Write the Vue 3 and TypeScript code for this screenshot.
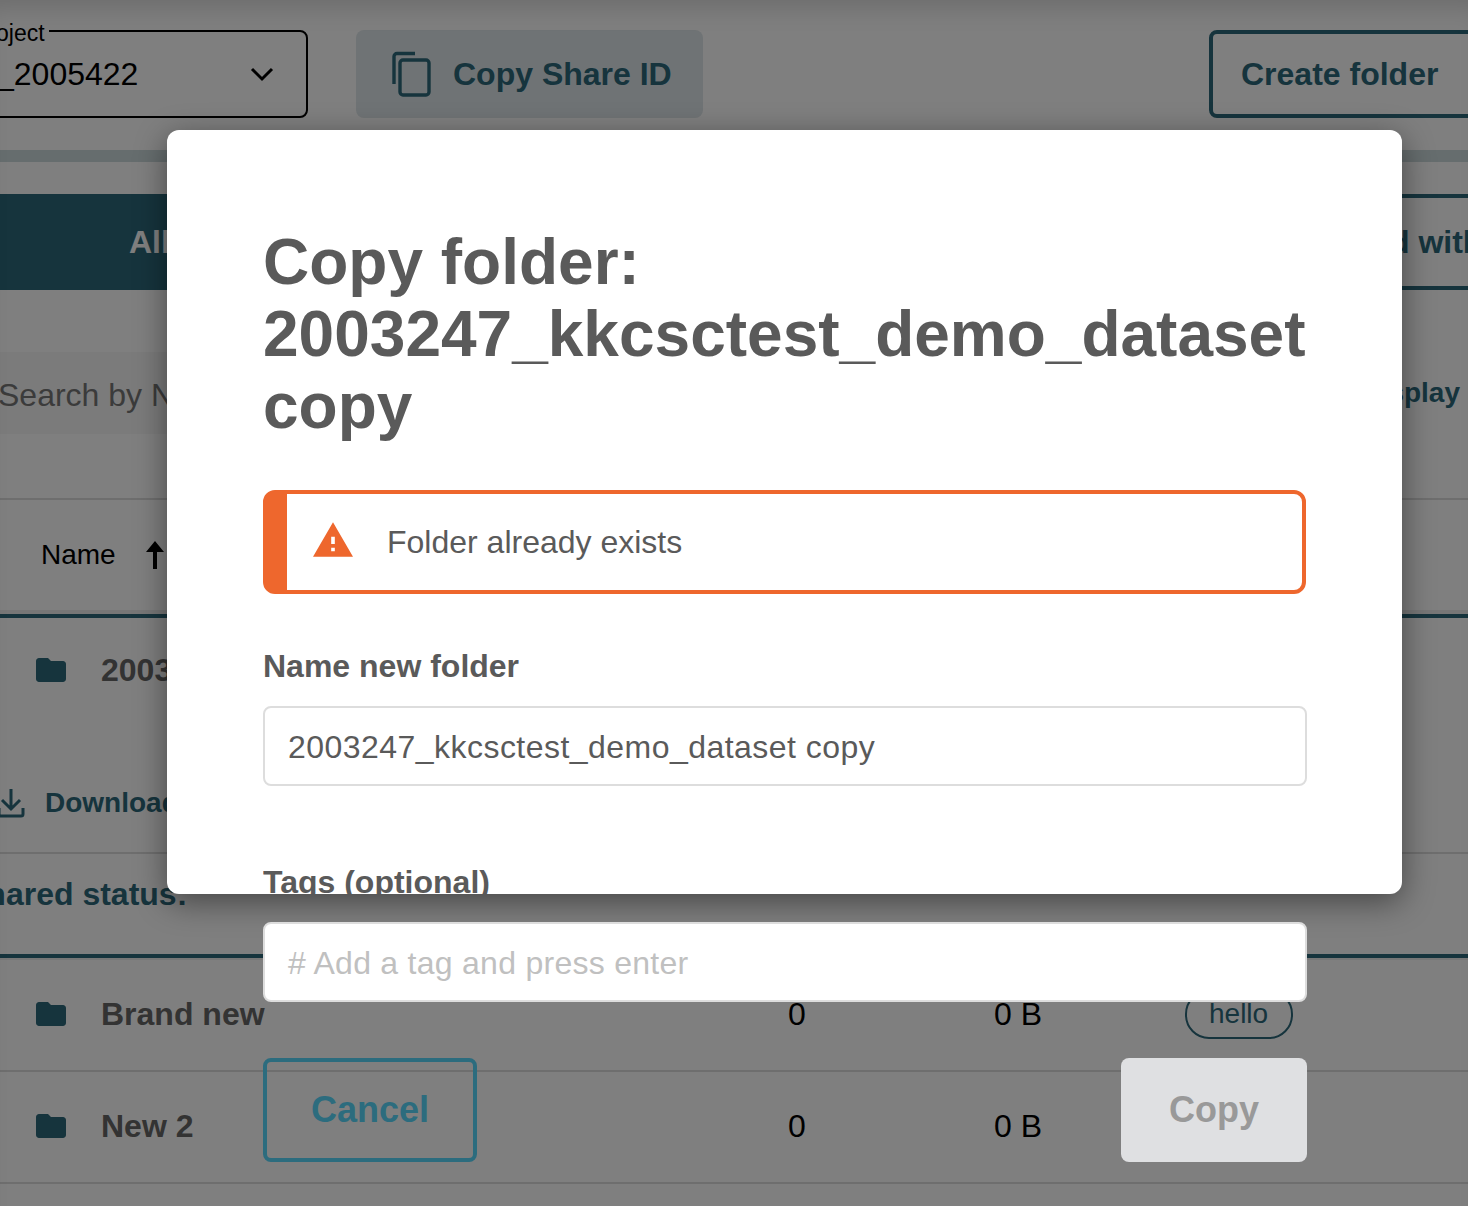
<template>
  <div class="page">
    <div class="toolbar">
      <fieldset class="project">
        <legend>Project</legend>
        <span class="project__value">_2005422</span>
        <svg class="project__chevron" viewBox="0 0 24 16" fill="none" stroke="currentColor" stroke-width="3">
          <path d="M2 3l10 10L22 3" />
        </svg>
      </fieldset>
      <button class="share">
        <svg viewBox="0 0 40 46" width="40" height="46" fill="none" stroke="currentColor" stroke-width="3.4">
          <path d="M23 2.5H5A3 3 0 0 0 2 5.5V33" />
          <rect x="8" y="9" width="29" height="35" rx="3" />
        </svg>
        Copy Share ID
      </button>
      <button class="create">Create folder</button>
    </div>

    <div class="progress" />

    <div class="tabs">
      <div class="tab tab--active"><span>All folders</span></div>
      <div class="tab tab--other"><span>Shared with me</span></div>
    </div>

    <div class="search-row">
      <div class="search">Search by Name</div>
      <div class="display">Display</div>
    </div>

    <div class="thead">
      <span>Name</span>
      <svg viewBox="0 0 20 28" width="20" height="28" fill="currentColor">
        <path d="M10 0L19 11H12V28H8V11H1z" />
      </svg>
    </div>

    <div class="folder-open">
      <div class="folder-open__name">
        <svg class="folder" viewBox="2 4 20 16"><path :d="folderPath" /></svg>
        <strong>2003247_kkcsctest_demo_dataset</strong>
      </div>
      <div class="folder-open__actions">
        <svg viewBox="0 0 28 30" width="28" height="30" fill="none" stroke="currentColor" stroke-width="3">
          <path d="M14 1v19M5 12l9 9 9-9M2 20v6a2 2 0 0 0 2 2h20a2 2 0 0 0 2-2v-6" />
        </svg>
        <span>Download</span>
      </div>
      <div class="folder-open__status">Shared status:</div>
    </div>

    <div class="rows">
      <div v-for="row in rows" :key="row.name" class="row">
        <svg class="folder" viewBox="2 4 20 16"><path :d="folderPath" /></svg>
        <strong class="row__name">{{ row.name }}</strong>
        <span class="row__count">{{ row.count }}</span>
        <span class="row__size">{{ row.size }}</span>
        <span v-if="row.tag" class="row__tag">{{ row.tag }}</span>
      </div>
    </div>

    <div class="overlay">
      <div class="modal">
        <h1>Copy folder:<br />2003247_kkcsctest_demo_dataset copy</h1>
        <div class="alert">
          <svg viewBox="1 2 22 19" width="40" height="35"><path d="M1 21h22L12 2 1 21zm12-3h-2v-2h2v2zm0-4h-2v-4h2v4z" /></svg>
          <span>Folder already exists</span>
        </div>
        <label class="label">Name new folder</label>
        <div class="input">2003247_kkcsctest_demo_dataset copy</div>
        <label class="label label--tags">Tags (optional)</label>
        <div class="input input--placeholder"># Add a tag and press enter</div>
        <div class="actions">
          <button class="cancel">Cancel</button>
          <button class="copy">Copy</button>
        </div>
      </div>
    </div>
  </div>
</template>

<script setup lang="ts">
type Row = { name: string; count: number; size: string; tag?: string };

const folderPath =
  'M10 4H4c-1.1 0-1.99.9-1.99 2L2 18c0 1.1.9 2 2 2h16c1.1 0 2-.9 2-2V8c0-1.1-.9-2-2-2h-8l-2-2z';

const rows: Row[] = [
  { name: 'Brand new', count: 0, size: '0 B', tag: 'hello' },
  { name: 'New 2', count: 0, size: '0 B' },
];
</script>

<style>
html,
body {
  margin: 0;
  background: #fff;
}
</style>

<style scoped>
.page {
  --teal: #2c687a;
  position: relative;
  width: 1468px;
  height: 1206px;
  overflow: hidden;
  background: #fff;
  color: #000;
  font-family: 'Liberation Sans', Arial, sans-serif;
}
button {
  font-family: inherit;
  cursor: pointer;
}

.toolbar {
  display: flex;
  align-items: flex-start;
  height: 88px;
  padding-top: 30px;
}
.project {
  box-sizing: border-box;
  display: flex;
  align-items: center;
  justify-content: space-between;
  width: 372px;
  height: 88px;
  margin: 0 48px 0 -64px;
  padding: 0 32px 0 58px;
  border: 2px solid #000;
  border-radius: 8px;
  min-inline-size: 0;
}
.project legend {
  margin-left: -27px;
  padding: 0 4px;
  height: 2px;
  font-size: 23px;
  line-height: 6px;
}
.project__value {
  font-size: 32px;
}
.project__chevron {
  width: 24px;
  height: 16px;
}
.share {
  display: flex;
  align-items: center;
  gap: 21px;
  width: 347px;
  height: 88px;
  padding: 0 0 0 36px;
  border: 0;
  border-radius: 8px;
  background: #dfe7ea;
  color: var(--teal);
  font-size: 32px;
  font-weight: 700;
}
.create {
  width: 270px;
  height: 88px;
  margin-left: auto;
  margin-right: -11px;
  padding: 0 0 0 28px;
  border: 4px solid var(--teal);
  border-radius: 8px;
  background: transparent;
  color: var(--teal);
  font-size: 32px;
  font-weight: 700;
  text-align: left;
}

.progress {
  height: 12px;
  margin-top: 32px;
  background: #ccdadd;
}

.tabs {
  display: flex;
  justify-content: space-between;
  height: 96px;
  margin-top: 32px;
  font-size: 32px;
  font-weight: 700;
}
.tab {
  box-sizing: border-box;
  display: flex;
  align-items: center;
  white-space: nowrap;
}
.tab--active {
  width: 400px;
  padding-left: 129px;
  background: var(--teal);
  color: #fff;
}
.tab--other {
  width: 400px;
  padding-left: 233px;
  border-top: 4px solid var(--teal);
  border-bottom: 4px solid var(--teal);
  color: var(--teal);
}

.search-row {
  display: flex;
  justify-content: space-between;
  align-items: center;
  height: 82px;
  margin-top: 62px;
}
.search {
  width: 400px;
  height: 82px;
  margin-left: -2px;
  line-height: 86px;
  background: #f6f6f6;
  color: #777;
  font-size: 32px;
}
.display {
  margin-right: 8px;
  color: var(--teal);
  font-size: 28px;
  font-weight: 700;
}

.thead {
  display: flex;
  align-items: center;
  gap: 29px;
  height: 110px;
  margin-top: 64px;
  padding: 0 0 4px 41px;
  border-top: 2px solid #ddd;
  border-bottom: 4px solid var(--teal);
  box-shadow: 0 -4px 0 #eee inset;
  font-size: 28px;
}

.folder {
  width: 30px;
  height: 24px;
  flex: none;
  fill: var(--teal);
}
.folder-open {
  box-sizing: border-box;
  height: 340px;
  border-bottom: 4px solid var(--teal);
  box-shadow: 0 2px 0 #eee;
}
.folder-open__name {
  display: flex;
  align-items: center;
  gap: 35px;
  height: 104px;
  padding-left: 36px;
  font-size: 32px;
  color: #666;
}
.folder-open__actions {
  display: flex;
  align-items: center;
  gap: 20px;
  height: 132px;
  box-sizing: border-box;
  padding-top: 32px;
  margin-left: -3px;
  border-bottom: 2px solid #ddd;
  color: var(--teal);
  font-size: 28px;
  font-weight: 700;
}
.folder-open__status {
  margin-left: -35px;
  padding-top: 22px;
  color: var(--teal);
  font-size: 32px;
  font-weight: 700;
}

.rows {
  padding-top: 2px;
}
.row {
  display: flex;
  align-items: center;
  box-sizing: border-box;
  height: 112px;
  padding: 0 0 2px 36px;
  border-bottom: 2px solid #ddd;
  font-size: 32px;
}
.row__name {
  width: 687px;
  margin-left: 35px;
  color: #666;
}
.row__count {
  width: 206px;
}
.row__size {
  width: 191px;
}
.row__tag {
  padding: 6px 23px 7px 22px;
  border: 2px solid var(--teal);
  border-radius: 24px;
  color: var(--teal);
  font-size: 28px;
}

.overlay {
  position: absolute;
  inset: 0;
  background: rgba(0, 0, 0, 0.5);
  box-shadow: inset 0 24px 24px -16px rgba(0, 0, 0, 0.15);
}
.modal {
  box-sizing: border-box;
  position: absolute;
  left: 167px;
  top: 130px;
  width: 1235px;
  height: 764px;
  padding: 96px 95px 0 96px;
  border-radius: 12px;
  background: #fff;
  box-shadow: 0 8px 32px rgba(0, 0, 0, 0.45);
  color: #5a5a5a;
}
h1 {
  margin: 0;
  font-size: 64px;
  line-height: 72px;
  font-weight: 700;
}
.alert {
  box-sizing: border-box;
  display: flex;
  align-items: center;
  gap: 34px;
  height: 104px;
  margin: 48px 1px 0 0;
  padding-left: 26px;
  border: 4px solid #ee672d;
  border-left-width: 24px;
  border-radius: 12px;
  font-size: 32px;
}
.alert svg {
  margin-bottom: 6px;
  fill: #ee672d;
}
.label {
  display: block;
  margin-top: 52px;
  font-size: 32px;
  font-weight: 700;
  line-height: 40px;
}
.label--tags {
  height: 32px;
  margin-top: 76px;
  overflow: hidden;
}
.input {
  box-sizing: border-box;
  height: 80px;
  margin-top: 20px;
  padding-left: 23px;
  border: 2px solid #ddd;
  border-radius: 8px;
  background: #fff;
  font-size: 32px;
  letter-spacing: 0.46px;
  line-height: 78px;
}
.label--tags + .input {
  margin-top: 28px;
}
.input--placeholder {
  color: #c0c0c0;
  letter-spacing: 0.27px;
}
.actions {
  display: flex;
  justify-content: space-between;
  margin-top: 56px;
}
.actions button {
  height: 104px;
  border-radius: 8px;
  font-size: 36px;
  font-weight: 700;
}
.cancel {
  width: 214px;
  border: 4px solid #2c6c7e;
  background: transparent;
  color: #2c6c7e;
}
.copy {
  width: 186px;
  border: 0;
  background: #dfe0e2;
  color: #999;
}
</style>
